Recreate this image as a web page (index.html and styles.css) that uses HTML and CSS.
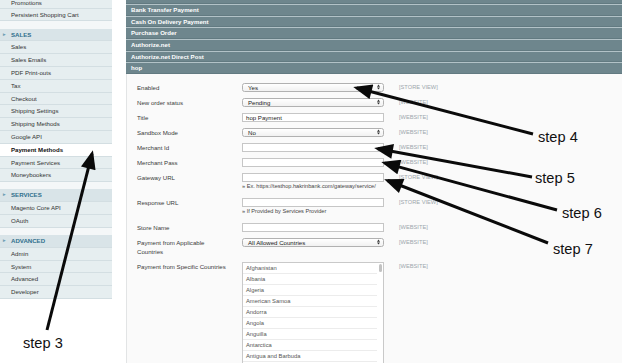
FILE: index.html
```html
<!DOCTYPE html>
<html>
<head>
<meta charset="utf-8">
<link rel="stylesheet" href="styles.css">
</head>
<body>
<div class="page">
  <aside class="sidebar">
    <ul class="group first">
      <li class="item top">Promotions</li>
      <li class="item">Persistent Shopping Cart</li>
    </ul>
    <div class="section">
      <div class="section-head"><span class="caret">▸</span>SALES</div>
      <ul class="group">
        <li class="item">Sales</li>
        <li class="item">Sales Emails</li>
        <li class="item">PDF Print-outs</li>
        <li class="item">Tax</li>
        <li class="item">Checkout</li>
        <li class="item">Shipping Settings</li>
        <li class="item">Shipping Methods</li>
        <li class="item">Google API</li>
        <li class="item active">Payment Methods</li>
        <li class="item">Payment Services</li>
        <li class="item">Moneybookers</li>
      </ul>
    </div>
    <div class="section">
      <div class="section-head"><span class="caret">▸</span>SERVICES</div>
      <ul class="group">
        <li class="item">Magento Core API</li>
        <li class="item">OAuth</li>
      </ul>
    </div>
    <div class="section">
      <div class="section-head"><span class="caret">▸</span>ADVANCED</div>
      <ul class="group">
        <li class="item">Admin</li>
        <li class="item">System</li>
        <li class="item">Advanced</li>
        <li class="item">Developer</li>
      </ul>
    </div>
  </aside>

  <main class="main">
    <div class="bar partial"></div>
    <div class="bar">Bank Transfer Payment</div>
    <div class="bar">Cash On Delivery Payment</div>
    <div class="bar">Purchase Order</div>
    <div class="bar">Authorize.net</div>
    <div class="bar">Authorize.net Direct Post</div>
    <div class="bar">hop</div>

    <div class="form">
      <div class="row">
        <div class="label">Enabled</div>
        <div class="control"><div class="select">Yes<svg class="updown" viewBox="0 0 4 7"><path d="M0,3 L2,0.3 L4,3 z M0,4 L2,6.7 L4,4 z"/></svg></div></div>
        <div class="scope">[STORE VIEW]</div>
      </div>
      <div class="row">
        <div class="label">New order status</div>
        <div class="control"><div class="select">Pending<svg class="updown" viewBox="0 0 4 7"><path d="M0,3 L2,0.3 L4,3 z M0,4 L2,6.7 L4,4 z"/></svg></div></div>
        <div class="scope">[WEBSITE]</div>
      </div>
      <div class="row">
        <div class="label">Title</div>
        <div class="control"><div class="input">hop Payment</div></div>
        <div class="scope">[WEBSITE]</div>
      </div>
      <div class="row">
        <div class="label">Sandbox Mode</div>
        <div class="control"><div class="select">No<svg class="updown" viewBox="0 0 4 7"><path d="M0,3 L2,0.3 L4,3 z M0,4 L2,6.7 L4,4 z"/></svg></div></div>
        <div class="scope">[WEBSITE]</div>
      </div>
      <div class="row">
        <div class="label">Merchant Id</div>
        <div class="control"><div class="input"></div></div>
        <div class="scope">[WEBSITE]</div>
      </div>
      <div class="row">
        <div class="label">Merchant Pass</div>
        <div class="control"><div class="input"></div></div>
        <div class="scope">[WEBSITE]</div>
      </div>
      <div class="row">
        <div class="label">Gateway URL</div>
        <div class="control">
          <div class="input"></div>
          <div class="hint">» Ex. https://testhop.hakrinbank.com/gateway/service/</div>
        </div>
        <div class="scope">[STORE VIEW]</div>
      </div>
      <div class="row">
        <div class="label">Response URL</div>
        <div class="control">
          <div class="input"></div>
          <div class="hint">» If Provided by Services Provider</div>
        </div>
        <div class="scope">[STORE VIEW]</div>
      </div>
      <div class="row">
        <div class="label">Store Name</div>
        <div class="control"><div class="input"></div></div>
        <div class="scope">[WEBSITE]</div>
      </div>
      <div class="row">
        <div class="label">Payment from Applicable<br>Countries</div>
        <div class="control"><div class="select">All Allowed Countries<svg class="updown" viewBox="0 0 4 7"><path d="M0,3 L2,0.3 L4,3 z M0,4 L2,6.7 L4,4 z"/></svg></div></div>
        <div class="scope">[WEBSITE]</div>
      </div>
      <div class="row">
        <div class="label">Payment from Specific Countries</div>
        <div class="control">
          <div class="multiselect">
            <div class="opt">Afghanistan</div>
            <div class="opt">Albania</div>
            <div class="opt">Algeria</div>
            <div class="opt">American Samoa</div>
            <div class="opt">Andorra</div>
            <div class="opt">Angola</div>
            <div class="opt">Anguilla</div>
            <div class="opt">Antarctica</div>
            <div class="opt">Antigua and Barbuda</div>
            <div class="opt"></div>
            <span class="thumb"></span>
          </div>
        </div>
        <div class="scope">[WEBSITE]</div>
      </div>
    </div>
  </main>
</div>

<svg class="annotations" width="622" height="363" viewBox="0 0 622 363">
  <defs>
    <marker id="ah" viewBox="0 0 10 8" refX="8" refY="4" markerWidth="21" markerHeight="15" markerUnits="userSpaceOnUse" orient="auto">
      <path d="M0,0 L10,4 L0,8 z" fill="#0a0a0a"/>
    </marker>
  </defs>
  <g stroke="#0a0a0a" stroke-width="3" fill="none" marker-end="url(#ah)">
    <line x1="47" y1="330" x2="92" y2="153.9"/>
    <line x1="533" y1="134" x2="356.9" y2="88"/>
    <line x1="532" y1="177" x2="377.9" y2="148.7"/>
    <line x1="557" y1="210" x2="384.9" y2="163.1"/>
    <line x1="548" y1="243" x2="387.7" y2="180.5"/>
  </g>
  <g class="steps">
    <text x="23" y="348">step 3</text>
    <text x="538" y="142">step 4</text>
    <text x="535" y="183">step 5</text>
    <text x="562" y="218">step 6</text>
    <text x="553" y="254">step 7</text>
  </g>
</svg>
</body>
</html>
```

FILE: styles.css
```css
* { box-sizing: border-box; }

html, body {
  margin: 0;
  padding: 0;
}

body {
  width: 622px;
  height: 363px;
  overflow: hidden;
  position: relative;
  background: #ffffff;
  font-family: "Liberation Sans", Arial, sans-serif;
  color: #333;
}

.page {
  display: flex;
  width: 622px;
  height: 363px;
}

/* ---------- sidebar ---------- */
.sidebar {
  width: 112px;
  flex: none;
  display: flex;
  flex-direction: column;
  background: #f4f7f8;
  align-self: flex-start;
}

.group {
  list-style: none;
  margin: 0;
  padding: 0;
}

.section {
  margin-top: 7.2px;
}

.item, .section-head {
  height: 12.8px;
  line-height: 11.8px;
  border-bottom: 1px solid #d3dee2;
  padding-left: 11px;
  font-size: 6.1px;
  white-space: nowrap;
}

.item.top {
  height: 8.6px;
  line-height: 6px;
}

.item {
  background: #e6eef0;
  color: #333;
}

.item.active {
  background: #ffffff;
  color: #111;
  font-weight: bold;
}

.section-head {
  position: relative;
  background: #d9e4e8;
  color: #2f6f8c;
  font-weight: bold;
}

.caret {
  position: absolute;
  left: 3px;
  top: 0;
  font-size: 4.5px;
  color: #6f9db3;
}

/* ---------- main ---------- */
.main {
  flex: 1;
  margin-left: 14px;
  display: flex;
  flex-direction: column;
  height: 363px;
  overflow: hidden;
}

.bar {
  height: 11.7px;
  flex: none;
  background: #6e868d;
  border-top: 1px solid #b2c2c7;
  box-shadow: inset 0 -1px 0 #627a81;
  color: #ffffff;
  font-weight: bold;
  font-size: 6.1px;
  line-height: 10px;
  padding-left: 5px;
  white-space: nowrap;
}

.bar.partial {
  height: 4px;
  border-top: none;
}

.form {
  flex: 1;
  background: #fafafa;
  border-left: 1px solid #e2e4e5;
  padding: 5.8px 0 0 10px;
  overflow: hidden;
}

.row {
  display: grid;
  grid-template-columns: 105px 142px auto;
  padding: 3px 0;
  align-items: start;
}

.label {
  font-size: 6.1px;
  line-height: 9px;
  color: #3b3b3b;
  white-space: nowrap;
}

.scope {
  padding-left: 15px;
  font-size: 5.7px;
  line-height: 9px;
  color: #9ca7ad;
  white-space: nowrap;
}

.select, .input {
  height: 9px;
  font-size: 6.1px;
  line-height: 7px;
  color: #222;
  white-space: nowrap;
}

.select {
  position: relative;
  border: 1px solid #b1b1b1;
  border-radius: 2.5px;
  background: linear-gradient(#ffffff, #f1f1f1);
  padding-left: 5px;
}

.updown {
  position: absolute;
  right: 3px;
  top: 0.5px;
  width: 3px;
  height: 6px;
  fill: #333;
}

.input {
  border: 1px solid #c6c6c6;
  background: #ffffff;
  padding-left: 3px;
}

.hint {
  font-size: 5.6px;
  line-height: 8px;
  margin-bottom: 2px;
  color: #444;
  white-space: nowrap;
}

.multiselect {
  position: relative;
  border: 1px solid #c9c9c9;
  background: #ffffff;
  padding-right: 6px;
}

.opt {
  height: 11px;
  line-height: 10px;
  border-bottom: 1px solid #ececec;
  padding-left: 3px;
  font-size: 5.8px;
  color: #555;
  white-space: nowrap;
}

.thumb {
  position: absolute;
  right: 1.5px;
  top: 1px;
  width: 3px;
  height: 8px;
  border-radius: 2px;
  background: #c2c2c2;
}

/* ---------- annotations ---------- */
.annotations {
  position: absolute;
  left: 0;
  top: 0;
  pointer-events: none;
}

.steps text {
  font-family: "Liberation Sans", Arial, sans-serif;
  font-size: 14.6px;
  fill: #111;
}
```
